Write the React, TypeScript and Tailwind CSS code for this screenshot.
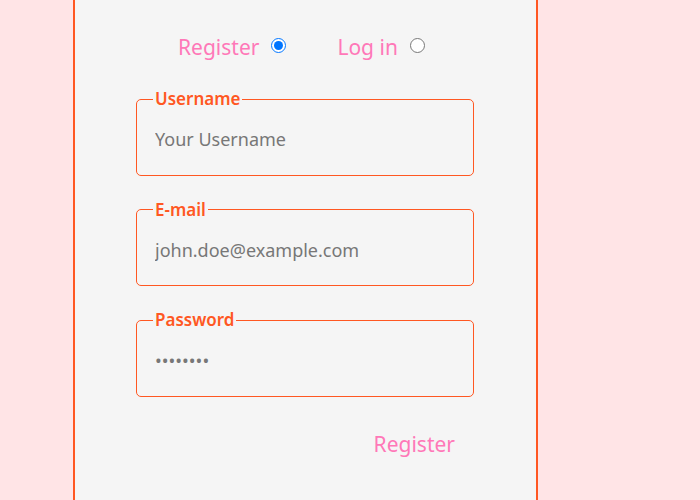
import React from "react";

function Field({ label, placeholder, type = "text", value }: { label: string; placeholder?: string; type?: string; value?: string }) {
  return (
    <fieldset className="ml-[61px] w-[338px] h-[82.5px] border border-[#ff5722] rounded-[5px] flex flex-col">
      <legend className="ml-[16px] px-[2px] text-[17px] leading-[12px] font-semibold text-[#ff5722]">{label}</legend>
      <input
        type={type}
        placeholder={placeholder}
        defaultValue={value}
        readOnly={!!value}
        className="mt-[21px] ml-[18px] w-[300px] bg-transparent outline-none text-[18px] text-[#777] placeholder:text-[#777]"
      />
    </fieldset>
  );
}

export default function App() {
  return (
    <div className="min-h-[500px] h-[500px] overflow-hidden bg-[#ffe4e6]" style={{ fontFamily: "'Noto Sans', 'Open Sans', sans-serif" }}>
      <div className="ml-[73px] w-[465px] h-[500px] bg-[#f5f5f5] border-x-2 border-[#ff5722]">
        <div className="pt-[34px] flex items-center">
          <label className="ml-[103px] flex items-center text-[21px] leading-[26px] text-[#ff78b8]">
            Register
            <input type="radio" name="m" defaultChecked className="ml-[12px] w-[15px] h-[15px] -mt-[3px]" />
          </label>
          <label className="ml-[51px] flex items-center text-[21px] leading-[26px] text-[#ff78b8]">
            Log in
            <input type="radio" name="m" className="ml-[12px] w-[15px] h-[15px] -mt-[3px]" />
          </label>
        </div>
        <div className="mt-[33px] flex flex-col gap-[28px]">
          <Field label="Username" placeholder="Your Username" />
          <Field label="E-mail" placeholder="john.doe@example.com" />
          <Field label="Password" type="password" value="password" />
        </div>
        <div className="mt-[34px] flex justify-end pr-[81px]">
          <button className="text-[21px] text-[#ff78b8] leading-[26px]">Register</button>
        </div>
      </div>
    </div>
  );
}
